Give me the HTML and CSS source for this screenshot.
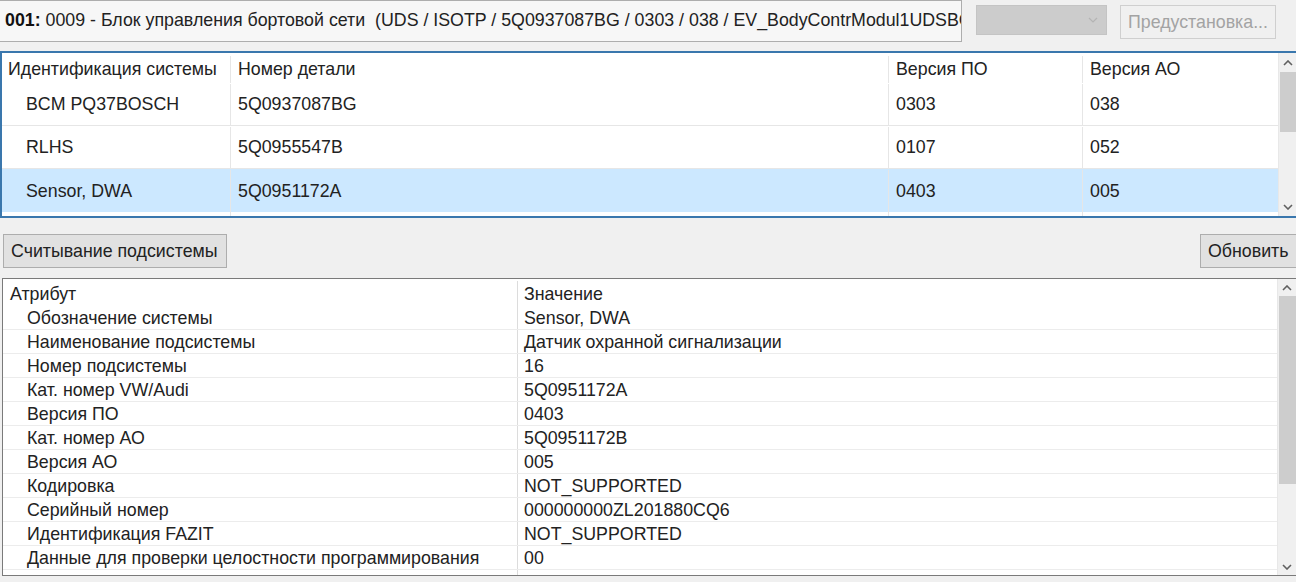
FILE: index.html
```html
<!DOCTYPE html>
<html lang="ru">
<head>
<meta charset="utf-8">
<link rel="stylesheet" href="styles.css">
</head>
<body>
<div class="topbar">
  <div class="title-field"><b>001:</b> 0009 - Блок управления бортовой сети&nbsp; (UDS / ISOTP / 5Q0937087BG / 0303 / 038 / EV_BodyContrModul1UDSBCM</div>
  <div class="combo">
    <svg class="combo-arrow" width="10" height="6" viewBox="0 0 10 6"><polyline points="1,1 5,5 9,1" fill="none" stroke="#b4b4b4" stroke-width="1.2"/></svg>
  </div>
  <div class="btn btn-disabled preset">Предустановка...</div>
</div>

<div class="upper">
  <div class="grid-area">
    <div class="urow uhead">
      <div class="c c1 head-text">Идентификация системы</div>
      <div class="c c2">Номер детали</div>
      <div class="c c3">Версия ПО</div>
      <div class="c c4">Версия АО</div>
    </div>
    <div class="urow">
      <div class="c c1 ind">BCM PQ37BOSCH</div>
      <div class="c c2">5Q0937087BG</div>
      <div class="c c3">0303</div>
      <div class="c c4">038</div>
    </div>
    <div class="urow">
      <div class="c c1 ind">RLHS</div>
      <div class="c c2">5Q0955547B</div>
      <div class="c c3">0107</div>
      <div class="c c4">052</div>
    </div>
    <div class="urow sel">
      <div class="c c1 ind">Sensor, DWA</div>
      <div class="c c2">5Q0951172A</div>
      <div class="c c3">0403</div>
      <div class="c c4">005</div>
    </div>
    <div class="urow ufill">
      <div class="c c1"></div><div class="c c2"></div><div class="c c3"></div><div class="c c4"></div>
    </div>
  </div>
  <div class="vscroll">
    <svg class="arr" width="10" height="6" viewBox="0 0 10 6"><polyline points="1,5 5,1 9,5" fill="none" stroke="#606060" stroke-width="1.6"/></svg>
    <div class="track up-track"><div class="thumb up-thumb"></div></div>
    <svg class="arr" width="10" height="6" viewBox="0 0 10 6"><polyline points="1,1 5,5 9,1" fill="none" stroke="#606060" stroke-width="1.6"/></svg>
  </div>
</div>

<div class="midbar">
  <div class="btn read-btn">Считывание подсистемы</div>
  <div class="btn refresh-btn">Обновить</div>
</div>

<div class="lower">
  <div class="lgrid">
    <div class="lrow lhead">
      <div class="l1 lhead-text">Атрибут</div>
      <div class="l2">Значение</div>
    </div>
    <div class="lrow"><div class="l1 ind">Обозначение системы</div><div class="l2">Sensor, DWA</div></div>
    <div class="lrow"><div class="l1 ind">Наименование подсистемы</div><div class="l2">Датчик охранной сигнализации</div></div>
    <div class="lrow"><div class="l1 ind">Номер подсистемы</div><div class="l2">16</div></div>
    <div class="lrow"><div class="l1 ind">Кат. номер VW/Audi</div><div class="l2">5Q0951172A</div></div>
    <div class="lrow"><div class="l1 ind">Версия ПО</div><div class="l2">0403</div></div>
    <div class="lrow"><div class="l1 ind">Кат. номер АО</div><div class="l2">5Q0951172B</div></div>
    <div class="lrow"><div class="l1 ind">Версия АО</div><div class="l2">005</div></div>
    <div class="lrow"><div class="l1 ind">Кодировка</div><div class="l2">NOT_SUPPORTED</div></div>
    <div class="lrow"><div class="l1 ind">Серийный номер</div><div class="l2">000000000ZL201880CQ6</div></div>
    <div class="lrow"><div class="l1 ind">Идентификация FAZIT</div><div class="l2">NOT_SUPPORTED</div></div>
    <div class="lrow"><div class="l1 ind">Данные для проверки целостности программирования</div><div class="l2">00</div></div>
    <div class="lrow"><div class="l1 ind"></div><div class="l2"></div></div>
  </div>
  <div class="vscroll lscroll">
    <svg class="arr" width="10" height="6" viewBox="0 0 10 6"><polyline points="1,5 5,1 9,5" fill="none" stroke="#606060" stroke-width="1.6"/></svg>
    <div class="track low-track"><div class="thumb low-thumb"></div></div>
    <svg class="arr" width="10" height="6" viewBox="0 0 10 6"><polyline points="1,1 5,5 9,1" fill="none" stroke="#606060" stroke-width="1.6"/></svg>
  </div>
</div>
</body>
</html>
```
FILE: styles.css
```css
html, body {
  margin: 0;
  padding: 0;
  width: 1296px;
  height: 582px;
  overflow: hidden;
  background: #f0f0f0;
  font-family: "Liberation Sans", Arial, sans-serif;
  font-size: 17.8px;
  color: #222222;
}

/* top bar */
.topbar {
  display: flex;
  align-items: flex-start;
  height: 51px;
}
.title-field {
  box-sizing: border-box;
  width: 962px;
  height: 42px;
  border: 1px solid #adadad;
  border-left: none;
  background: #f7f7f7;
  padding: 8px 0 0 5px;
  white-space: nowrap;
  overflow: hidden;
  line-height: 22px;
}
.title-field b {
  font-weight: bold;
  color: #111111;
}
.combo {
  box-sizing: border-box;
  margin: 5px 0 0 14px;
  width: 131px;
  height: 30px;
  background: #cccccc;
  border: 1px solid #c4c4c4;
  display: flex;
  align-items: center;
  justify-content: flex-end;
  padding-right: 8px;
}
.btn {
  box-sizing: border-box;
  background: #e1e1e1;
  border: 1px solid #adadad;
  display: flex;
  align-items: center;
  white-space: nowrap;
}
.btn-disabled {
  background: #f0f0f0;
  border-color: #cfcfcf;
  color: #a3a3a3;
}
.preset {
  margin: 5px 0 0 13px;
  width: 156px;
  height: 34px;
  padding-left: 7px;
}

/* upper table */
.upper {
  display: flex;
  height: 167px;
  box-sizing: border-box;
  border-top: 2px solid #3a77ad;
  border-bottom: 2px solid #3a77ad;
  border-left: 2px solid #3a77ad;
  background: #ffffff;
}
.grid-area {
  width: 1276px;
  display: flex;
  flex-direction: column;
}
.urow {
  display: grid;
  grid-template-columns: 228px 658px 194px 196px;
  height: 43px;
  box-sizing: border-box;
  border-bottom: 1px solid #e6e6e6;
  align-items: stretch;
  padding-top: 1px;
}
.urow .c {
  display: flex;
  align-items: center;
  padding-left: 7px;
  white-space: nowrap;
  overflow: hidden;
  border-left: 1px solid #e6e6e6;
}
.urow .c1 {
  border-left: none;
  padding-left: 6px;
}
.urow .c1.ind {
  padding-left: 24px;
}
.uhead {
  height: 30px;
  border-bottom: none;
  padding-top: 3px;
}
.urow.sel {
  background: #cce8ff;
  border-bottom: none;
}
.urow.ufill {
  flex: 1;
  height: auto;
  border-bottom: none;
  padding-top: 0;
}
.vscroll {
  width: 18px;
  background: #f0f0f0;
  display: flex;
  flex-direction: column;
  align-items: center;
  border-left: 1px solid #e8e8e8;
}
.vscroll .arr {
  flex: none;
  margin: 7px 0 6px;
}
.track {
  flex: 1;
  width: 100%;
}
.thumb {
  background: #cdcdcd;
  width: 17px;
  margin-left: 1px;
}
.up-thumb {
  height: 60px;
}

/* middle buttons */
.midbar {
  display: flex;
  justify-content: space-between;
  align-items: flex-start;
  height: 60px;
  padding-top: 16px;
  box-sizing: border-box;
}
.read-btn {
  margin-left: 3px;
  width: 224px;
  height: 34px;
  padding-left: 7px;
  padding-top: 1px;
}
.refresh-btn {
  width: 100px;
  height: 34px;
  padding-left: 7px;
  padding-top: 1px;
  border-right: none;
  margin-right: -4px;
}

/* lower table */
.lower {
  display: flex;
  margin-left: 2px;
  height: 298px;
  box-sizing: border-box;
  border-top: 1px solid #7a7a7a;
  border-bottom: 1px solid #7a7a7a;
  border-left: 1px solid #7a7a7a;
  background: #ffffff;
}
.lgrid {
  width: 1276px;
  display: flex;
  flex-direction: column;
  overflow: hidden;
}
.lrow {
  display: grid;
  grid-template-columns: 514px 762px;
  height: 24px;
  flex: none;
  box-sizing: border-box;
  border-bottom: 1px solid #ececec;
  line-height: 24px;
}
.lrow .l1 {
  padding-left: 7px;
  white-space: nowrap;
  overflow: hidden;
}
.lrow .l1.ind {
  padding-left: 24px;
}
.lrow .l2 {
  padding-left: 6px;
  border-left: 1px solid #dcdcdc;
  white-space: nowrap;
  overflow: hidden;
}
.lhead {
  height: 27px;
  border-bottom: none;
  line-height: 26px;
  padding-top: 2px;
}
.lscroll .arr {
  margin: 6px 0 5px;
}
.low-thumb {
  height: 188px;
}
```
